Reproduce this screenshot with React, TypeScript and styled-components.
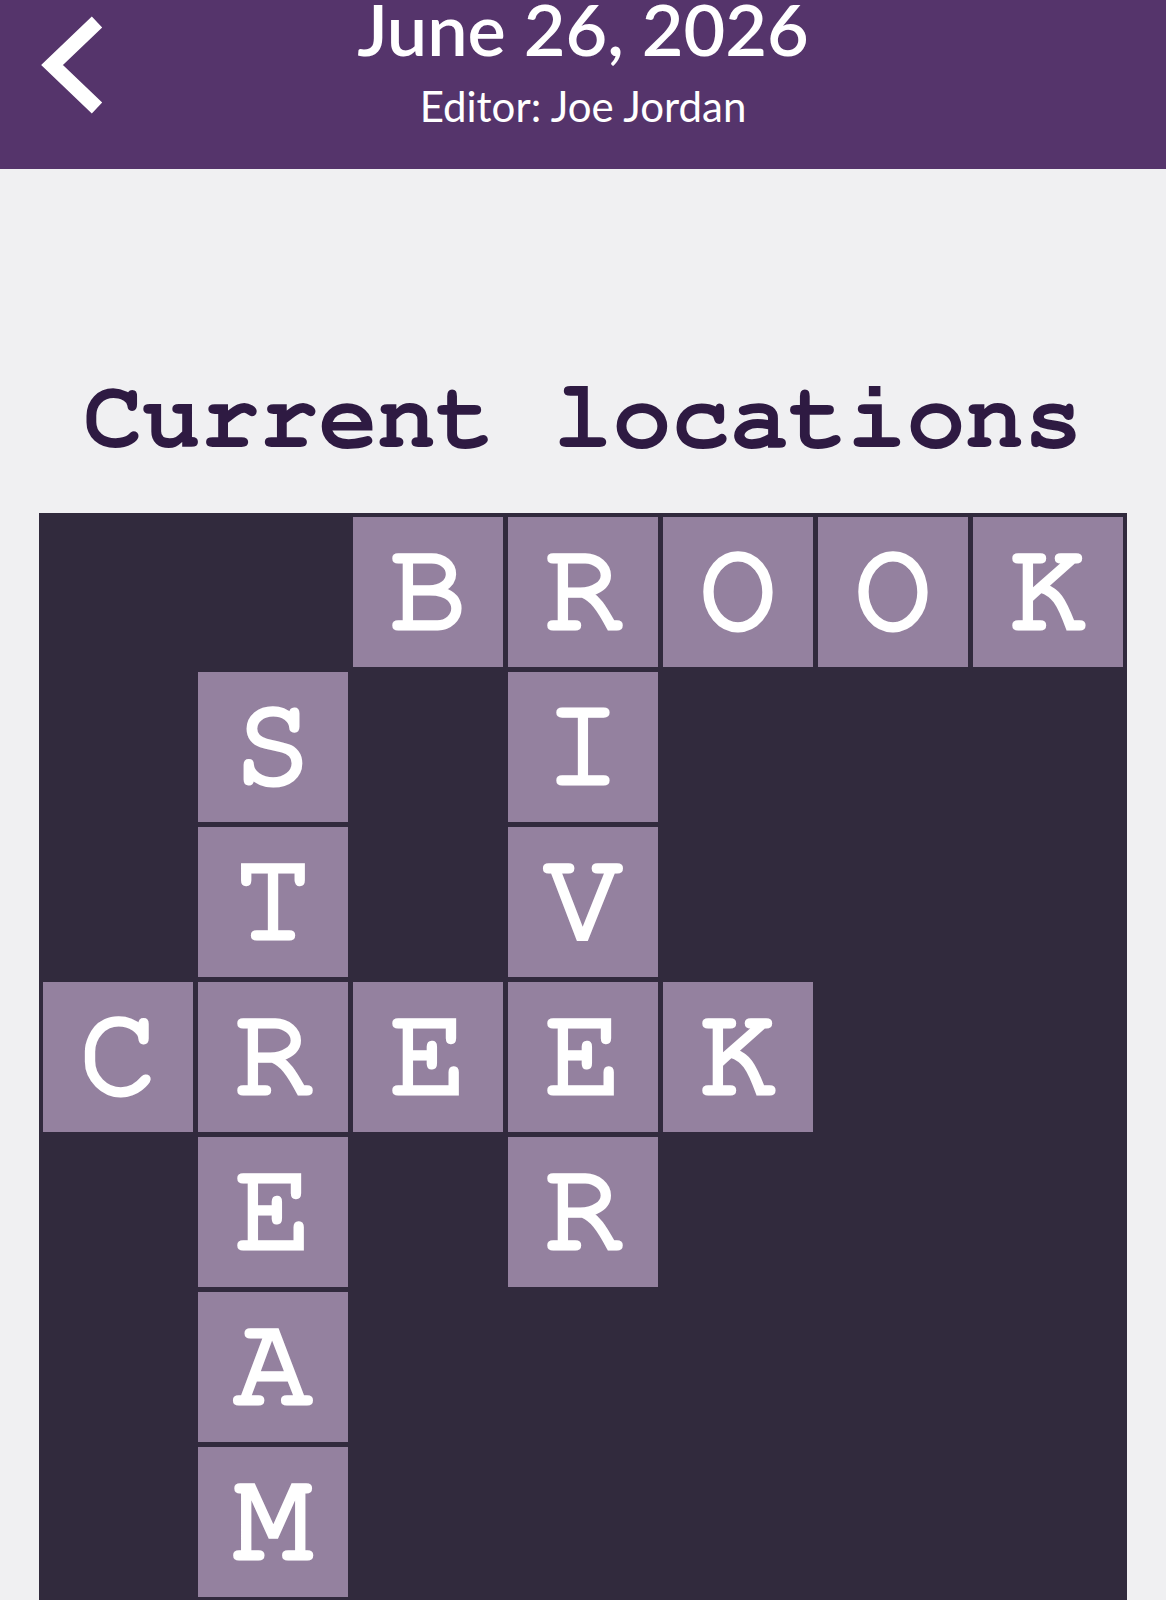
import React from 'react';
import styled, { createGlobalStyle } from 'styled-components';

const purple = '#55346b';
const ink = '#2e1a42';
const board = '#312a3d';
const tile = '#94819f';
const mono = "'FreeMono', 'Liberation Mono', monospace";

const GlobalStyle = createGlobalStyle`
  body {
    margin: 0;
    background-color: #f0f0f2;
    font-family: 'Lato', 'Open Sans', sans-serif;
  }
`;

const Header = styled.header`
  height: 169px;
  background-color: ${purple};
  display: grid;
  grid-template-columns: 1fr auto 1fr;
  align-items: start;
  box-sizing: border-box;
`;

const BackButton = styled.button`
  background: none;
  border: none;
  padding: 0;
  margin: 15px 0 0 40px;
  width: 64px;
  height: 100px;
  justify-self: start;
  cursor: pointer;
`;

const TitleBlock = styled.div`
  display: flex;
  flex-direction: column;
  align-items: center;
  color: white;
`;

const DateTitle = styled.h1`
  margin: 0;
  font-size: 72px;
  font-weight: 600;
  line-height: 56px;
`;

const Editor = styled.div`
  margin-top: 26px;
  font-size: 42px;
  font-weight: 400;
  line-height: 48px;
`;

const Main = styled.main`
  display: flex;
  flex-direction: column;
  align-items: center;
  padding-top: 199px;
`;

const Heading = styled.h2`
  margin: 0 0 45px;
  font-family: ${mono};
  font-weight: 700;
  font-size: 98px;
  line-height: 100px;
  color: ${ink};
  white-space: pre;
`;

const Board = styled.div`
  display: grid;
  grid-template-columns: repeat(7, 150px);
  grid-auto-rows: 150px;
  gap: 5px;
  padding: 4px;
  background-color: ${board};
`;

const Cell = styled.div<{ $filled: boolean }>`
  display: flex;
  align-items: center;
  justify-content: center;
  padding-bottom: 6px;
  box-sizing: border-box;
  background-color: ${(p) => (p.$filled ? tile : 'transparent')};
  color: white;
  font-family: ${mono};
  font-weight: 400;
  font-size: 129px;
  line-height: 1;
  -webkit-text-stroke: 5px white;
`;

const layout = [
  '  BROOK',
  ' S I   ',
  ' T V   ',
  'CREEK  ',
  ' E R   ',
  ' A     ',
  ' M     ',
];

function Chevron() {
  return (
    <svg width="64" height="100" viewBox="0 0 64 100">
      <polyline
        points="57,7 12,50 57,93"
        fill="none"
        stroke="white"
        strokeWidth="15"
        strokeLinejoin="miter"
      />
    </svg>
  );
}

export default function App() {
  return (
    <>
      <GlobalStyle />
      <Header>
        <BackButton aria-label="Back">
          <Chevron />
        </BackButton>
        <TitleBlock>
          <DateTitle>June 26, 2026</DateTitle>
          <Editor>Editor: Joe Jordan</Editor>
        </TitleBlock>
      </Header>
      <Main>
        <Heading>Current locations</Heading>
        <Board>
          {layout.flatMap((row, r) =>
            row.split('').map((ch, c) => (
              <Cell key={`${r}-${c}`} $filled={ch !== ' '}>
                {ch.trim()}
              </Cell>
            ))
          )}
        </Board>
      </Main>
    </>
  );
}
